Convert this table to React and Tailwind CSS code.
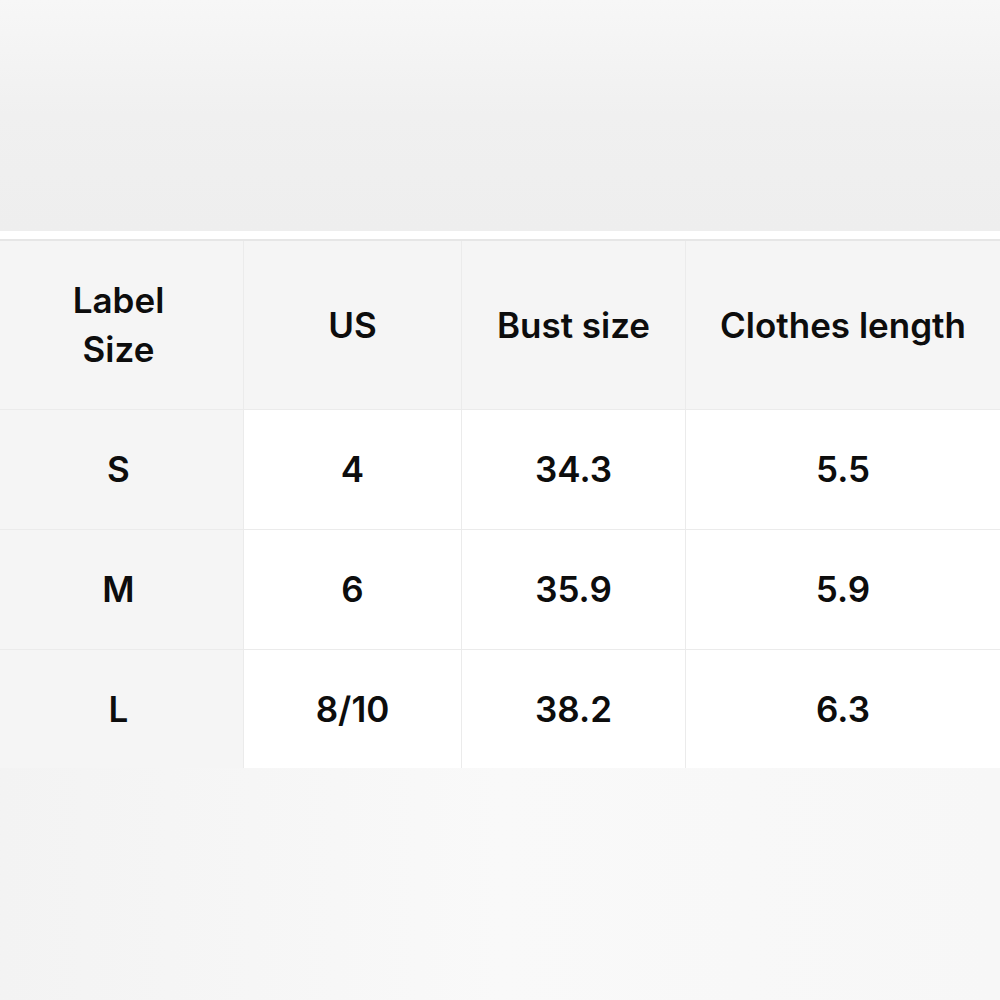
import React from "react";

const rows = [
  { label: "S", us: "4", bust: "34.3", length: "5.5" },
  { label: "M", us: "6", bust: "35.9", length: "5.9" },
  { label: "L", us: "8/10", bust: "38.2", length: "6.3" },
];

const App = () => {
  return (
    <div
      className="w-[1000px] h-[1000px] flex flex-col bg-[#f4f4f4] text-[#0d0d0d]"
      style={{ fontFamily: "Inter, 'Liberation Sans', sans-serif" }}
    >
      {/* faded area above the chart */}
      <div className="h-[231px] bg-gradient-to-b from-[#f7f7f7] via-[#f0f0f0] to-[#eeeeee]" />
      <div className="h-[10px] bg-white border-b-2 border-[#e6e6e6]" />

      <div className="grid grid-cols-[244px_218px_224px_314px] text-[35px] font-semibold">
        <div className="h-[169px] flex items-center justify-center pr-[6px] text-center leading-[49px] bg-[#f5f5f5] border-r border-[#ebebeb] border-b">
          Label
          <br />
          Size
        </div>
        <div className="h-[169px] flex items-center justify-center bg-[#f5f5f5] border-r border-b border-[#ebebeb]">
          US
        </div>
        <div className="h-[169px] flex items-center justify-center bg-[#f5f5f5] border-r border-b border-[#ebebeb]">
          Bust size
        </div>
        <div className="h-[169px] flex items-center justify-center bg-[#f5f5f5] border-b border-[#ebebeb]">
          Clothes length
        </div>

        {rows.map((r, i) => {
          const last = i === rows.length - 1;
          const h = last ? "h-[118px]" : "h-[120px] border-b";
          return (
            <React.Fragment key={r.label}>
              <div className={`${h} flex items-center justify-center pr-[6px] bg-[#f5f5f5] border-r border-[#ebebeb]`}>
                {r.label}
              </div>
              <div className={`${h} flex items-center justify-center bg-white border-r border-[#ebebeb]`}>
                {r.us}
              </div>
              <div className={`${h} flex items-center justify-center bg-white border-r border-[#ebebeb]`}>
                {r.bust}
              </div>
              <div className={`${h} flex items-center justify-center bg-white border-[#ebebeb]`}>
                {r.length}
              </div>
            </React.Fragment>
          );
        })}
      </div>

      {/* faded area below the chart */}
      <div className="flex-1 bg-gradient-to-r from-[#f3f3f3] via-[#f9f9f9] to-[#f7f7f7]" />
    </div>
  );
};

export default App;
